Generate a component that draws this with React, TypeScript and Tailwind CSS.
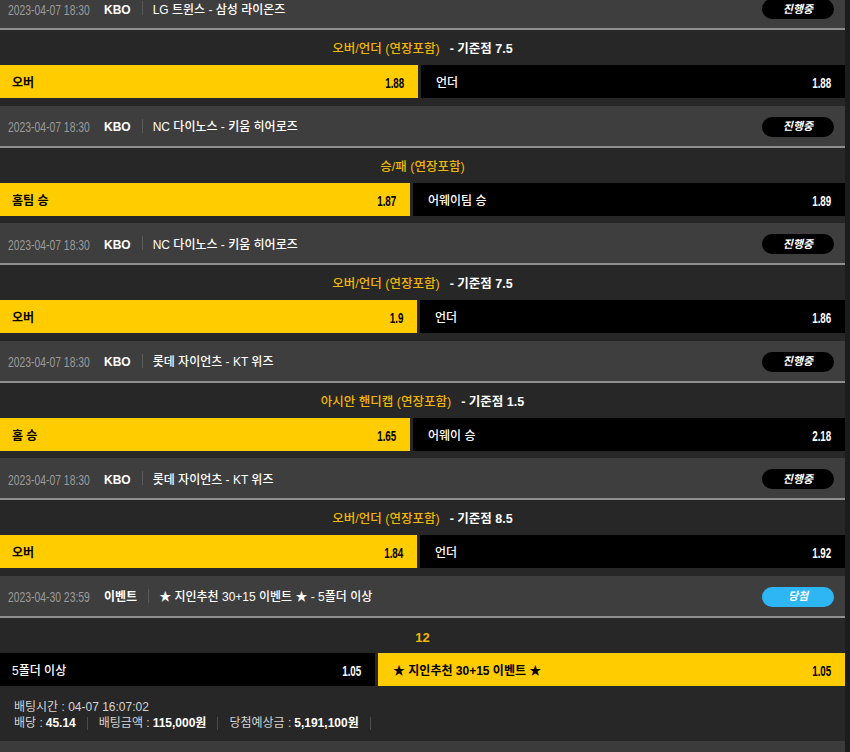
import React from "react";

type Side = { label: string; odds: string; sel: boolean };
type Block = {
  date: string;
  league: string;
  match: string;
  status: "live" | "win";
  title: string;
  boldTitle?: boolean;
  extra?: string;
  leftW: string;
  rightW: string;
  left: Side;
  right: Side;
};

const blocks: Block[] = [
  {
    date: "2023-04-07 18:30",
    league: "KBO",
    match: "LG 트윈스 - 삼성 라이온즈",
    status: "live",
    title: "오버/언더 (연장포함)",
    extra: "- 기준점 7.5",
    leftW: "w-[418px]",
    rightW: "w-[424px]",
    left: { label: "오버", odds: "1.88", sel: true },
    right: { label: "언더", odds: "1.88", sel: false },
  },
  {
    date: "2023-04-07 18:30",
    league: "KBO",
    match: "NC 다이노스 - 키움 히어로즈",
    status: "live",
    title: "승/패 (연장포함)",
    leftW: "w-[410px]",
    rightW: "w-[432px]",
    left: { label: "홈팀 승", odds: "1.87", sel: true },
    right: { label: "어웨이팀 승", odds: "1.89", sel: false },
  },
  {
    date: "2023-04-07 18:30",
    league: "KBO",
    match: "NC 다이노스 - 키움 히어로즈",
    status: "live",
    title: "오버/언더 (연장포함)",
    extra: "- 기준점 7.5",
    leftW: "w-[417px]",
    rightW: "w-[425px]",
    left: { label: "오버", odds: "1.9", sel: true },
    right: { label: "언더", odds: "1.86", sel: false },
  },
  {
    date: "2023-04-07 18:30",
    league: "KBO",
    match: "롯데 자이언츠 - KT 위즈",
    status: "live",
    title: "아시안 핸디캡 (연장포함)",
    extra: "- 기준점 1.5",
    leftW: "w-[410px]",
    rightW: "w-[432px]",
    left: { label: "홈 승", odds: "1.65", sel: true },
    right: { label: "어웨이 승", odds: "2.18", sel: false },
  },
  {
    date: "2023-04-07 18:30",
    league: "KBO",
    match: "롯데 자이언츠 - KT 위즈",
    status: "live",
    title: "오버/언더 (연장포함)",
    extra: "- 기준점 8.5",
    leftW: "w-[417px]",
    rightW: "w-[425px]",
    left: { label: "오버", odds: "1.84", sel: true },
    right: { label: "언더", odds: "1.92", sel: false },
  },
  {
    date: "2023-04-30 23:59",
    league: "이벤트",
    match: "★ 지인추천 30+15 이벤트 ★ - 5폴더 이상",
    status: "win",
    title: "12",
    boldTitle: true,
    leftW: "w-[375px]",
    rightW: "w-[467px]",
    left: { label: "5폴더 이상", odds: "1.05", sel: false },
    right: { label: "★ 지인추천 30+15 이벤트 ★", odds: "1.05", sel: true },
  },
];

const FONT = "font-['Liberation_Sans','Noto_Sans_CJK_KR',sans-serif]";

function Cell({ side, w, isRight }: { side: Side; w: string; isRight: boolean }) {
  const bg = side.sel ? "bg-[#ffcc00] text-black" : "bg-black text-white";
  const pl = isRight ? "pl-[15px]" : "pl-[12px]";
  return (
    <div className={`${w} ${bg} ${pl} pr-[14px] pt-[3px] h-full flex items-center justify-between`}>
      <span className={`text-[12px] leading-none whitespace-nowrap ${side.sel ? "font-bold" : "font-medium"}`}>{side.label}</span>
      <span className="inline-block origin-right scale-x-[0.7] text-[14px] font-bold leading-none">{side.odds}</span>
    </div>
  );
}

function BlockView({ b, last }: { b: Block; last: boolean }) {
  return (
    <div className="bg-[#272727]">
      <div className="h-[42px] bg-[#3e3e3e] border-b-2 border-[#8f8f8f] flex items-center pl-[8px] pr-[11px]">
        <div className="w-[96px] shrink-0 pt-[3px] whitespace-nowrap">
          <span className="inline-block whitespace-nowrap origin-left scale-x-[0.74] text-[14px] text-[#9a9a9a] leading-none">{b.date}</span>
        </div>
        <span className="pt-[3px] text-[12px] font-bold text-white leading-none whitespace-nowrap">{b.league}</span>
        <span className="ml-[11px] mr-[10px] w-px h-[14px] bg-[#5a5a5a]" />
        <span className="pt-[3px] text-[12px] font-medium text-white leading-none whitespace-nowrap">{b.match}</span>
        <div className="flex-1" />
        {b.status === "live" ? (
          <div className="mt-[2px] w-[72px] h-[20px] rounded-full bg-black flex items-center justify-center">
            <span className="text-[11px] italic font-bold text-white leading-none">진행중</span>
          </div>
        ) : (
          <div className="mt-[2px] w-[72px] h-[20px] rounded-full bg-[#2db5f4] flex items-center justify-center">
            <span className="text-[11px] italic font-bold text-white leading-none">당첨</span>
          </div>
        )}
      </div>
      <div className="h-[35px] pt-[4px] flex items-center justify-center">
        <span className={`text-[12.5px] text-[#f2b705] leading-none ${b.boldTitle ? "font-bold text-[13px]" : "font-medium"}`}>{b.title}</span>
        {b.extra && <span className="ml-[10px] text-[12.5px] text-white font-bold leading-none">{b.extra}</span>}
      </div>
      <div className="h-[33px] flex gap-[3px]">
        <Cell side={b.left} w={b.leftW} isRight={false} />
        <Cell side={b.right} w={b.rightW} isRight={true} />
      </div>
      {last ? null : <div className="h-[7.5px]" />}
    </div>
  );
}

export default function App() {
  return (
    <div className={`w-[850px] h-[752px] overflow-hidden bg-[#1c1c1c] ${FONT}`}>
      <div className="w-[845px] -mt-[12px]">
        {blocks.map((b, i) => (
          <BlockView key={i} b={b} last={i === blocks.length - 1} />
        ))}
        <div className="bg-[#272727] h-[55px] pl-[14px] pt-[15px] flex flex-col gap-[4px] text-[12px] text-[#d4d4d4] leading-none">
          <div>배팅시간 : 04-07 16:07:02</div>
          <div className="flex items-center">
            <span>배당 : </span>
            <span className="ml-[3px] font-bold text-white">45.14</span>
            <span className="mx-[11px] w-px h-[13px] bg-[#4a4a4a]" />
            <span>배팅금액 : </span>
            <span className="ml-[3px] font-bold text-white">115,000원</span>
            <span className="mx-[11px] w-px h-[13px] bg-[#4a4a4a]" />
            <span>당첨예상금 : </span>
            <span className="ml-[3px] font-bold text-white">5,191,100원</span>
            <span className="mx-[11px] w-px h-[13px] bg-[#4a4a4a]" />
          </div>
        </div>
        <div className="h-[20px] bg-[#3b3b3b]" />
      </div>
    </div>
  );
}
